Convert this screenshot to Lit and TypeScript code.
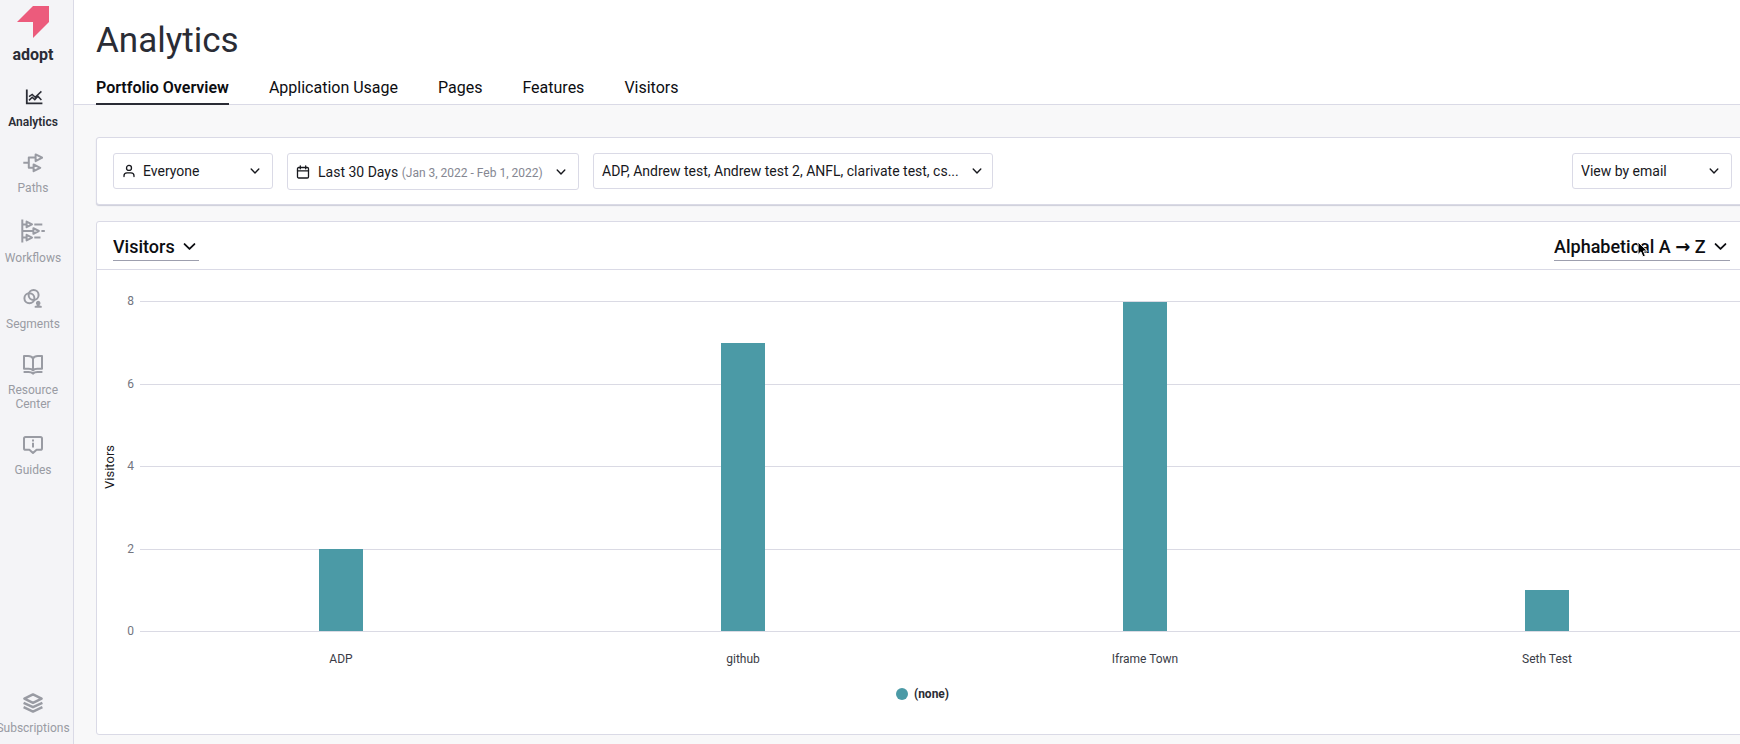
import { LitElement, html, css, svg, nothing } from "lit";
import { customElement, property } from "lit/decorators.js";
import { classMap } from "lit/directives/class-map.js";

const icons: Record<string, unknown> = {
  analytics: svg`<g fill="none" stroke="currentColor" stroke-width="1.8"><path d="M3.8 2.5V16.4H19.4"/><path d="M6 9.6 9.2 7.4l3 2.8L18.4 4.4M6 13.4l3.2-3.2 2.6 2.4 3-3.4 3.6 3.8" stroke-width="1.5"/></g>`,
  paths: svg`<g fill="none" stroke="currentColor" stroke-width="2" stroke-linejoin="round"><path d="M.3 9.8h5.4M12 4.6H5.8v10.2h4.6"/><path d="M12.6 1.4 19.2 4.7l-6.6 3.4zM10.6 11.4l6.6 3.4-6.6 3.4z"/></g>`,
  workflows: svg`<g fill="none" stroke="currentColor" stroke-width="2" stroke-linejoin="round"><path d="M1.3.4v23.2M1.3 5.4h4M1.3 12h11M1.3 18.6h4M13.3 5.4h8M20.4 12h3.4M13.3 18.6h6.2"/><path d="M5.6 2.6 11 5.4 5.6 8.2zM12.4 9.2l5.4 2.8-5.4 2.8zM5.6 15.8l5.4 2.8-5.4 2.8z"/></g>`,
  segments: svg`<g fill="none" stroke="currentColor" stroke-width="2"><circle cx="10.6" cy="6" r="5"/><circle cx="6.4" cy="9.2" r="5"/></g><path fill="currentColor" d="M15.2 11.8a2.3 2.3 0 0 1 1.3 4.2v.6l2.2.5v1.7h-7v-1.7l2.2-.5V16a2.3 2.3 0 0 1 1.3-4.2z"/>`,
  resources: svg`<g fill="none" stroke="currentColor" stroke-width="2" stroke-linejoin="round"><path d="M10 3.4C9 1.8 7.4 1.1 5.2 1.1H1v12.6h4.6c2.2 0 3.6.6 4.4 1.7.8-1.1 2.2-1.7 4.4-1.7H19V1.1h-4.2C12.6 1.1 11 1.8 10 3.4zV15"/><path d="M.6 17h5c2 0 3.4.6 4.4 1.7 1-1.1 2.4-1.7 4.4-1.7h5"/></g>`,
  guides: svg`<path d="M2.6 2h14.8q1.6 0 1.6 1.6v9.6q0 1.6-1.6 1.6h-3.8L10 18l-3.6-3.2H2.6Q1 14.8 1 13.2V3.6Q1 2 2.6 2z" fill="none" stroke="currentColor" stroke-width="2" stroke-linejoin="round"/><path d="M10 4.6v1.8M10 7.8v4.8" stroke="currentColor" stroke-width="2"/>`,
  subscriptions: svg`<g fill="none" stroke="currentColor" stroke-width="2.4" stroke-linejoin="round"><path d="M10 1.4 18.6 5.6 10 9.8 1.4 5.6z"/><path d="M.6 9.8 10 14.2l9.4-4.4M.6 14.2 10 18.6l9.4-4.4"/></g>`,
  user: svg`<g fill="none" stroke="currentColor" stroke-width="1.3" stroke-linecap="round"><circle cx="7" cy="3.9" r="2.5"/><path d="M2 12.6v-.8q0-3 3-3h4q3 0 3 3v.8"/></g>`,
  calendar: svg`<g fill="none" stroke="currentColor" stroke-width="1.3" stroke-linecap="round"><rect x="1.5" y="2.5" width="11" height="10.5" rx="1.2"/><path d="M1.5 5.8h11M4.3.8v3M9.7.8v3"/></g>`,
};

interface NavEntry {
  icon: string;
  label: string;
  size?: number;
  active?: boolean;
}

const icon = (name: string, size: number) =>
  html`<svg width=${size} height=${size} viewBox="0 0 ${size} ${size}" aria-hidden="true">${icons[name]}</svg>`;

const chevron = (size: number) =>
  html`<svg class="chevron" width=${size} height=${size} viewBox="0 0 10 10" aria-hidden="true">
    <path d="M1.2 3.1 5 6.9 8.8 3.1" fill="none" stroke="currentColor" stroke-width="1.4" stroke-linecap="round" stroke-linejoin="round"/>
  </svg>`;

@customElement("side-nav")
class SideNav extends LitElement {
  static styles = css`
    :host { display: flex; flex: none; background: #f4f4f7; border-right: 1px solid #dadae6; padding-right: 7px; overflow: hidden; }
    nav { display: flex; flex-direction: column; width: 66px; padding: 6px 0 9px; box-sizing: border-box; }
    a { display: flex; flex-direction: column; align-items: center; gap: 8px; color: #999ba3; text-decoration: none; font-size: 12px; line-height: 14px; text-align: center; }
    a.active { color: #2a2c35; font-weight: 600; }
    a.brand { gap: 7px; margin-bottom: 22px; color: #2a2c35; font-size: 16px; font-weight: 700; line-height: 20px; }
    ul { list-style: none; margin: 0; padding: 0; display: flex; flex-direction: column; gap: 24px; flex: 1; }
    li.last { margin-top: auto; }
    span { white-space: pre; }
    svg { display: block; }
  `;

  private entries: NavEntry[] = [
    { icon: "analytics", label: "Analytics", active: true },
    { icon: "paths", label: "Paths" },
    { icon: "workflows", label: "Workflows", size: 24 },
    { icon: "segments", label: "Segments" },
    { icon: "resources", label: "Resource\nCenter" },
    { icon: "guides", label: "Guides" },
    { icon: "subscriptions", label: "Subscriptions" },
  ];

  render() {
    return html`
      <nav aria-label="Main">
        <a class="brand" href="#home">
          <svg width="32" height="32" viewBox="0 0 32 32" aria-hidden="true"><path fill="#ec5b7c" d="M16 0H32V16L16 32V16H0z"/></svg>
          <span>adopt</span>
        </a>
        <ul>
          ${this.entries.map((e, i) => html`
            <li class=${classMap({ last: i === this.entries.length - 1 })}>
              <a href="#${e.icon}" class=${classMap({ active: !!e.active })} aria-current=${e.active ? "page" : nothing}>
                ${icon(e.icon, e.size ?? 20)}
                <span>${e.label}</span>
              </a>
            </li>`)}
        </ul>
      </nav>`;
  }
}

@customElement("bar-chart")
class BarChart extends LitElement {
  static styles = css`
    :host { display: block; padding: 31px 0 32px; }
    .chart { display: grid; grid-template-columns: 14px 11px 1fr; column-gap: 6px; padding-left: 6px; }
    .axis-title { writing-mode: vertical-rl; transform: rotate(180deg); place-self: center; font-size: 13px; line-height: 14px; color: #17181d; }
    .ticks { display: flex; flex-direction: column; justify-content: space-between; align-items: flex-end; margin: -7px 0; font-size: 12px; line-height: 15px; color: #73757f; }
    .plot { display: grid; height: 331px; }
    .lines, .bars { grid-area: 1 / 1; }
    .lines { display: flex; flex-direction: column; justify-content: space-between; }
    .line { height: 1px; background: #dadae4; }
    .bars, .names { display: grid; grid-auto-flow: column; grid-auto-columns: 1fr; justify-items: center; }
    .bars { align-items: end; padding: 1px 0; }
    .bar { width: 44px; background: #4b9aa6; }
    .names { grid-column: 3; margin-top: 19px; font-size: 12px; line-height: 16px; color: #3a3c46; }
    .legend { display: flex; justify-content: center; align-items: center; gap: 6px; margin-top: 19px; font-size: 12px; line-height: 16px; font-weight: 700; color: #2a2c35; }
    .dot { width: 12px; height: 12px; border-radius: 50%; background: #4b9aa6; }
  `;

  private ticks = [8, 6, 4, 2, 0];
  private data = [
    { name: "ADP", value: 2 },
    { name: "github", value: 7 },
    { name: "Iframe Town", value: 8 },
    { name: "Seth Test", value: 1 },
  ];

  render() {
    return html`
      <div class="chart">
        <div class="axis-title">Visitors</div>
        <div class="ticks">${this.ticks.map((t) => html`<span>${t}</span>`)}</div>
        <div class="plot">
          <div class="lines">${this.ticks.map(() => html`<div class="line"></div>`)}</div>
          <div class="bars">${this.data.map((d) => html`<div class="bar" style="height:${(d.value / 8) * 100}%"></div>`)}</div>
        </div>
        <div class="names">${this.data.map((d) => html`<span>${d.name}</span>`)}</div>
      </div>
      <div class="legend"><span class="dot"></span>(none)</div>`;
  }
}

@customElement("select-field")
class SelectField extends LitElement {
  static styles = css`
    :host { display: block; }
    .field { display: flex; align-items: center; box-sizing: border-box; color: #17181d; }
    .boxed { width: 160px; height: 36px; padding: 0 12px 0 8px; gap: 7px; border: 1px solid #dadae6; border-radius: 3px; background: #fff; font-size: 14px; }
    .plain { height: 29px; padding-right: 3px; gap: 8px; border-bottom: 1px solid #9d9fae; font-size: 18px; font-weight: 550; color: #0c0d11; }
    select { appearance: none; flex: 1; min-width: 0; border: 0; padding: 0; margin: 0; background: none; color: inherit; font: inherit; outline: none; }
    svg { flex: none; }
    .chevron { pointer-events: none; }
  `;
  @property() icon = "";
  @property() value = "";
  @property() label = "";
  @property() look: "boxed" | "plain" = "boxed";

  render() {
    return html`
      <label class="field ${this.look}">
        ${this.icon ? icon(this.icon, 14) : nothing}
        <select aria-label=${this.label}><option>${this.value}</option></select>
        ${chevron(this.look === "plain" ? 13 : 10)}
      </label>`;
  }
}

@customElement("app-root")
class AppRoot extends LitElement {
  static styles = css`
    :host { display: flex; min-height: 100vh; font-family: Roboto, "DejaVu Sans", sans-serif; color: #17181d; background: #f8f8f9; }
    main { flex: 1; min-width: 0; overflow: hidden; }
    header { background: #fff; border-bottom: 1px solid #dadae6; padding: 19px 22px 0; }
    h1 { margin: 0 0 13px; font-size: 35px; line-height: 44px; font-weight: 400; color: #2a2c35; }
    .tabs { display: flex; gap: 40px; margin-bottom: -1px; }
    .tabs a { color: #0c0d11; text-decoration: none; font-size: 16px; line-height: 24px; padding-bottom: 3px; border-bottom: 2px solid transparent; }
    .tabs a.active { font-weight: 600; border-color: #2a2c35; }
    .content { display: flex; flex-direction: column; gap: 16px; padding: 32px 0 8px 22px; margin-right: -9px; }
    .card { background: #fff; border: 1px solid #dadae6; border-radius: 3px; }
    .filters { display: flex; align-items: flex-start; gap: 14px; padding: 15px 16px 14px 16px; box-shadow: 0 1px 1px #cdced9; }
    .filters .end { margin-left: auto; }
    .picker { display: flex; align-items: center; gap: 8px; box-sizing: border-box; height: 37px; padding: 0 12px 0 8px; border: 1px solid #dadae6; border-radius: 3px; background: #fff; color: #17181d; font: inherit; font-size: 14px; text-align: left; }
    .picker.date { width: 292px; }
    .picker.apps { width: 400px; height: 36px; padding-right: 10px; }
    .picker .text { flex: 1; min-width: 0; white-space: nowrap; }
    .picker small { font-size: 12px; color: #858792; }
    .picker svg { flex: none; }
    .bar { display: flex; justify-content: space-between; padding: 10px 18px 8px 16px; border-bottom: 1px solid #dadae6; }
    .sort { position: relative; }
    .pointer { position: absolute; left: 83px; top: 9px; pointer-events: none; }
  `;

  private tabs = ["Portfolio Overview", "Application Usage", "Pages", "Features", "Visitors"];

  render() {
    return html`
      <side-nav></side-nav>
      <main>
        <header>
          <h1>Analytics</h1>
          <nav class="tabs" aria-label="Analytics views">
            ${this.tabs.map((t, i) => html`<a href="#tab-${i}" class=${classMap({ active: i === 0 })}>${t}</a>`)}
          </nav>
        </header>
        <div class="content">
          <section class="card filters" aria-label="Filters">
            <select-field icon="user" value="Everyone" label="Segment"></select-field>
            <button class="picker date" aria-haspopup="dialog">
              ${icon("calendar", 14)}
              <span class="text">Last 30 Days <small>(Jan 3, 2022 - Feb 1, 2022)</small></span>
              ${chevron(10)}
            </button>
            <button class="picker apps" aria-haspopup="listbox">
              <span class="text">ADP, Andrew test, Andrew test 2, ANFL, clarivate test, cs...</span>
              ${chevron(10)}
            </button>
            <select-field class="end" value="View by email" label="View by"></select-field>
          </section>
          <section class="card" aria-label="Visitors by application">
            <div class="bar">
              <select-field look="plain" value="Visitors" label="Metric"></select-field>
              <div class="sort">
                <select-field look="plain" value="Alphabetical A → Z" label="Sort order"></select-field>
                <svg class="pointer" width="12" height="18" viewBox="0 0 12 18" aria-hidden="true">
                  <path d="M1 1v12.6l2.9-2.7 2 4.9 2.5-1-2-4.8H10.4z" fill="#000" stroke="#fff" stroke-width="1"/>
                </svg>
              </div>
            </div>
            <bar-chart></bar-chart>
          </section>
        </div>
      </main>`;
  }
}
